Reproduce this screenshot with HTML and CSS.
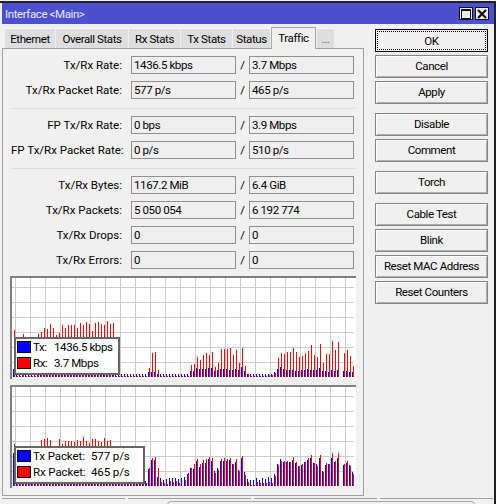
FILE: index.html
```html
<!DOCTYPE html>
<html lang="en">
<head>
<meta charset="utf-8">
<title>Interface &lt;Main&gt;</title>
<link rel="stylesheet" href="styles.css">
</head>
<body>
<div class="window">
  <header class="titlebar">
    <span class="title">Interface &lt;Main&gt;</span>
    <div class="controls">
      <span class="ctl"><svg width="12" height="10" viewBox="0 0 12 10"><rect x="1.5" y="0.5" width="9" height="9" fill="none" stroke="#111" stroke-width="1"/><rect x="1" y="0" width="10" height="2" fill="#111"/></svg></span>
      <span class="ctl"><svg width="12" height="10" viewBox="0 0 12 10"><path d="M2 1 L10 9 M10 1 L2 9" stroke="#111" stroke-width="2.2" fill="none"/></svg></span>
    </div>
  </header>
  <div class="body">
    <main class="left">
      <nav class="tabs">
        <span class="tab w1">Ethernet</span>
        <span class="tab w2">Overall Stats</span>
        <span class="tab w3">Rx Stats</span>
        <span class="tab w3">Tx Stats</span>
        <span class="tab w4">Status</span>
        <span class="tab active">Traffic</span>
        <span class="tab w5">...</span>
      </nav>
      <section class="panel">
        <div class="row"><label>Tx/Rx Rate:</label><output>1436.5 kbps</output><i>/</i><output>3.7 Mbps</output></div>
        <div class="row"><label>Tx/Rx Packet Rate:</label><output>577 p/s</output><i>/</i><output>465 p/s</output></div>
        <hr>
        <div class="row"><label>FP Tx/Rx Rate:</label><output>0 bps</output><i>/</i><output>3.9 Mbps</output></div>
        <div class="row"><label>FP Tx/Rx Packet Rate:</label><output>0 p/s</output><i>/</i><output>510 p/s</output></div>
        <hr>
        <div class="row"><label>Tx/Rx Bytes:</label><output>1167.2 MiB</output><i>/</i><output>6.4 GiB</output></div>
        <div class="row"><label>Tx/Rx Packets:</label><output>5 050 054</output><i>/</i><output>6 192 774</output></div>
        <div class="row"><label>Tx/Rx Drops:</label><output>0</output><i>/</i><output>0</output></div>
        <div class="row"><label>Tx/Rx Errors:</label><output>0</output><i>/</i><output>0</output></div>
        <div class="charts">
          <div class="chart" id="chart1">
            <div class="legend">
              <div class="lg"><b class="sw blue"></b><span class="k1">Tx:</span><span>1436.5 kbps</span></div>
              <div class="lg"><b class="sw red"></b><span class="k1">Rx:</span><span>3.7 Mbps</span></div>
            </div>
          </div>
          <div class="chart" id="chart2">
            <div class="legend">
              <div class="lg"><b class="sw blue"></b><span class="k2">Tx Packet:</span><span>577 p/s</span></div>
              <div class="lg"><b class="sw red"></b><span class="k2">Rx Packet:</span><span>465 p/s</span></div>
            </div>
          </div>
        </div>
      </section>
    </main>
    <aside class="side">
      <button class="default"><span>OK</span></button>
      <button>Cancel</button>
      <button>Apply</button>
      <button class="sp">Disable</button>
      <button>Comment</button>
      <button class="sp">Torch</button>
      <button class="sp">Cable Test</button>
      <button>Blink</button>
      <button>Reset MAC Address</button>
      <button>Reset Counters</button>
    </aside>
  </div>
  <footer class="status">
    <span class="cell c1">enabled</span>
    <span class="cell c2"></span>
    <span class="cell c3">slave</span>
    <span class="cell c4">link ok</span>
    <span class="round"></span>
  </footer>
</div>
<script src="chart.js"></script>
</body>
</html>
```
FILE: styles.css
```css
html, body {
  margin: 0;
  padding: 0;
  width: 496px;
  height: 504px;
  overflow: hidden;
  background: #f0f0f0;
}
.window {
  width: 496px;
  height: 504px;
  box-sizing: border-box;
  padding: 1px 0 0 0;
  position: relative;
  overflow: hidden;
  font: 11.5px/14px Roboto, "Liberation Sans", Arial, sans-serif;
  letter-spacing: -0.4px;
  color: #000;
  background: #f0f0f0;
}
.window::before {
  content: "";
  position: absolute;
  top: 1px;
  left: 0;
  right: 0;
  height: 2px;
  background: #222;
}
.window::after {
  content: "";
  position: absolute;
  top: 1px;
  right: 0;
  bottom: 0;
  width: 2px;
  background: #222;
}
.titlebar {
  margin: 2px 2px 0 2px;
  height: 21px;
  background: #4d50cc;
  color: #e6e6f4;
  display: flex;
  align-items: center;
  justify-content: space-between;
  padding: 0 5px 0 3px;
}
.controls {
  display: flex;
  gap: 2px;
}
.ctl {
  width: 14px;
  height: 13px;
  box-sizing: border-box;
  border: 1px solid #111;
  background: #ececec;
  display: flex;
  align-items: center;
  justify-content: center;
}
.body {
  display: flex;
  height: 472px;
  padding-left: 2px;
}
.left {
  width: 362px;
  display: flex;
  flex-direction: column;
}
.tabs {
  display: flex;
  align-items: flex-end;
  height: 24px;
  padding-left: 3px;
  box-sizing: border-box;
  gap: 1px;
}
.tab {
  height: 20px;
  background: #dedede;
  border-top: 1px solid #f8f8f8;
  box-sizing: border-box;
  display: flex;
  align-items: center;
  justify-content: center;
}
.w1 { width: 50px; }
.w2 { width: 72px; }
.w3 { width: 51px; }
.w4 { width: 37px; }
.w5 { width: 17px; color: #555; }
.tab.active {
  width: 45px;
  height: 22px;
  background: #f0f0f0;
  border: 1px solid #a8a8a8;
  border-bottom: 0;
  padding-bottom: 1px;
  margin-bottom: -1px;
  position: relative;
  z-index: 1;
}
.panel {
  height: 448px;
  box-sizing: border-box;
  border: 1px solid #a0a0a0;
  padding: 7px 0 0 8px;
  display: flex;
  flex-direction: column;
  gap: 7px;
}
.row {
  display: flex;
  height: 18px;
  align-items: stretch;
}
.row label {
  width: 111px;
  margin-right: 9px;
  text-align: right;
  line-height: 18px;
  white-space: nowrap;
  letter-spacing: 0;
}
.row i {
  width: 13px;
  text-align: center;
  font-style: normal;
  line-height: 18px;
}
.row output {
  width: 105px;
  box-sizing: border-box;
  border: 1px solid #909090;
  padding-left: 2px;
  line-height: 16px;
  background: #efefef;
}
hr {
  margin: 2px 8px 0 0;
  height: 1px;
  border: 0;
  background: #dcdcdc;
}
.charts {
  margin-left: -1px;
  display: flex;
  flex-direction: column;
  gap: 6px;
}
.chart {
  position: relative;
  width: 346px;
  height: 103px;
  box-sizing: border-box;
  border-top: 2px solid #808080;
  border-left: 2px solid #808080;
  background: #fff;
}
.chart svg {
  display: block;
}
.legend {
  position: absolute;
  left: 2px;
  bottom: 4px;
  box-sizing: border-box;
  border: 2px solid #666;
  background: #fff;
  padding: 2px 1px;
  display: flex;
  flex-direction: column;
  gap: 4px;
  z-index: 2;
}
#chart1 .legend { width: 106px; height: 38px; }
#chart2 .legend { width: 131px; height: 38px; letter-spacing: -0.1px; }
.lg {
  display: flex;
  align-items: center;
  height: 12px;
  white-space: nowrap;
}
.sw {
  width: 14px;
  height: 12px;
  box-sizing: border-box;
  border: 1px solid #000;
  margin-right: 2px;
  flex: none;
}
.blue { background: #0000ff; }
.red { background: #ff0000; }
.k1 { width: 21px; flex: none; }
.k2 { width: 58px; flex: none; }
.side {
  display: flex;
  flex-direction: column;
  gap: 3px;
  margin-left: 11px;
  padding-top: 5px;
  width: 113px;
}
button {
  width: 113px;
  height: 23px;
  padding: 0 0 2px;
  box-sizing: border-box;
  background: #f0f0f0;
  border: 1px solid #858585;
  box-shadow: inset 1px 1px 0 #fff, inset -1px -1px 0 #b0b0b0;
  border-radius: 0;
  font: inherit;
  letter-spacing: inherit;
  color: #000;
  flex: none;
}
button.sp { margin-top: 6px; }
button.default {
  border: 1px solid #000;
  box-shadow: none;
  padding: 1px;
}
button.default span {
  display: flex;
  align-items: center;
  justify-content: center;
  height: 100%;
  box-sizing: border-box;
  border: 1px dotted #000;
}
.status {
  position: relative;
  display: flex;
  gap: 3px;
  margin-top: 2px;
  padding: 0 3px 0 2px;
}
.cell {
  height: 10px;
  box-sizing: border-box;
  border-top: 1px solid #a0a0a0;
  line-height: 14px;
  padding: 3px 0 0 3px;
  color: #666;
  flex: none;
}
.c1 { width: 123px; padding-left: 4px; }
.c2 { width: 123px; }
.c3 { width: 123px; }
.c4 { width: 113px; }
.round {
  position: absolute;
  top: 3px;
  left: 167px;
  width: 308px;
  height: 10px;
  box-sizing: border-box;
  border: 1px solid #a8a8a8;
  border-radius: 4px 4px 0 0;
}
```
FILE: chart.js
```js
var NS = "http://www.w3.org/2000/svg";
function fill(a, from, to, v) { for (var i = from; i <= to; i++) a[i] = v; }

/* chart 1 */
var r1 = [], b1 = [];
fill(r1, 0, 113, 1); fill(b1, 0, 113, 3);
r1[0] = 47; r1[3] = 43;
[43,45,49,48,53,49,42,44,52,49,52,52,52,49,54,52,55,53,46,54,55,53,52,56,53,54].forEach(function (v, i) { r1[8 + i] = v; });
r1[45] = 9; r1[46] = 24; r1[47] = 25; r1[48] = 7;
b1[0] = 8; b1[45] = 5; b1[46] = 5; b1[47] = 5;
[12,13,20,17,22,24,22,25,10,14,28,28,28,29,22,27,14,29,11].forEach(function (v, i) { r1[59 + i] = v; });
[6,6,9,8,8,8,9,9,6,7,8,8,8,7,7,8,7,10,6].forEach(function (v, i) { b1[59 + i] = v; });
r1[78] = 3; r1[79] = 1; r1[85] = 2; r1[86] = 2; r1[87] = 4; b1[87] = 5;
[19,24,23,25,25,29,25,20,21,24,26,32,22,20,33,14,23,23,36,27,35,0,24,27,21,11].forEach(function (v, i) { r1[88 + i] = v; });
[8,10,8,7,7,7,6,6,7,7,8,7,7,7,9,6,6,5,7,6,7,0,6,6,5,5].forEach(function (v, i) { b1[88 + i] = v; });

/* chart 2 */
var r2 = [], b2 = [];
fill(r2, 0, 113, 2); fill(b2, 0, 113, 3);
b2[0] = 33; r2[0] = 42;
[46,47,48,46,40,40,47,42,45,45,45,44,46,45,49,45,43,47,47,45,44,48,45,46].forEach(function (v, i) { r2[9 + i] = v; });
r2[44] = 3; b2[44] = 5;
b2[45] = 17; r2[45] = 18; b2[46] = 26; r2[46] = 28; b2[47] = 26; r2[47] = 29;
b2[48] = 9; r2[48] = 18;
[[8,4],[6,3],[7,2],[8,5],[8,4],[8,5],[7,3]].forEach(function (p, i) { b2[49 + i] = p[0]; r2[49 + i] = p[1]; });
var p2 = [8,0,9,6,12,13,18,18,17,22,25,27,19,22,23,26,23,27,27,29,25,28,15,13,18,16,25,27,25,28,25,27,26,28,22,22,24,27,16,15,28,30,14,11,7,4,6,1,6,1,8,4,6,3,8,3,7,3,9,4,8,3,12,10,22,21,27,25,24,25,24,25,24,24,26,29,23,24,20,20,21,22,24,24,26,28,28,31,23,23,22,20,28,31,15,14,21,23,22,22,28,33,24,25,28,33,0,0,21,22,23,25,21,20,14,12];
for (var j = 0; j * 2 < p2.length; j++) { b2[56 + j] = p2[j * 2]; r2[56 + j] = p2[j * 2 + 1]; }

function draw(id, blue, red) {
  var chart = document.getElementById(id);
  var svg = document.createElementNS(NS, "svg");
  var w = 344, h = 101;
  svg.setAttribute("width", w);
  svg.setAttribute("height", h);
  svg.setAttribute("shape-rendering", "crispEdges");
  function rect(x, y, rw, rh, c) {
    var e = document.createElementNS(NS, "rect");
    e.setAttribute("x", x); e.setAttribute("y", y);
    e.setAttribute("width", rw); e.setAttribute("height", rh);
    e.setAttribute("fill", c);
    svg.appendChild(e);
  }
  var x, y;
  for (x = 3; x < 342; x += 15) rect(x, 0, 1, 99, "#cccccc");
  for (y = 9; y < 99; y += 15) rect(0, y, 342, 1, "#cccccc");
  for (var k = 0; k < 114; k++) {
    var bx = 1 + 3 * k;
    if (blue[k]) rect(bx, 99 - blue[k], 1, blue[k], "#0000ff");
    if (red[k]) rect(bx + 1, 99 - red[k], 1, red[k], "#ff0000");
  }
  chart.insertBefore(svg, chart.firstChild);
}
draw("chart1", b1, r1);
draw("chart2", b2, r2);
```
